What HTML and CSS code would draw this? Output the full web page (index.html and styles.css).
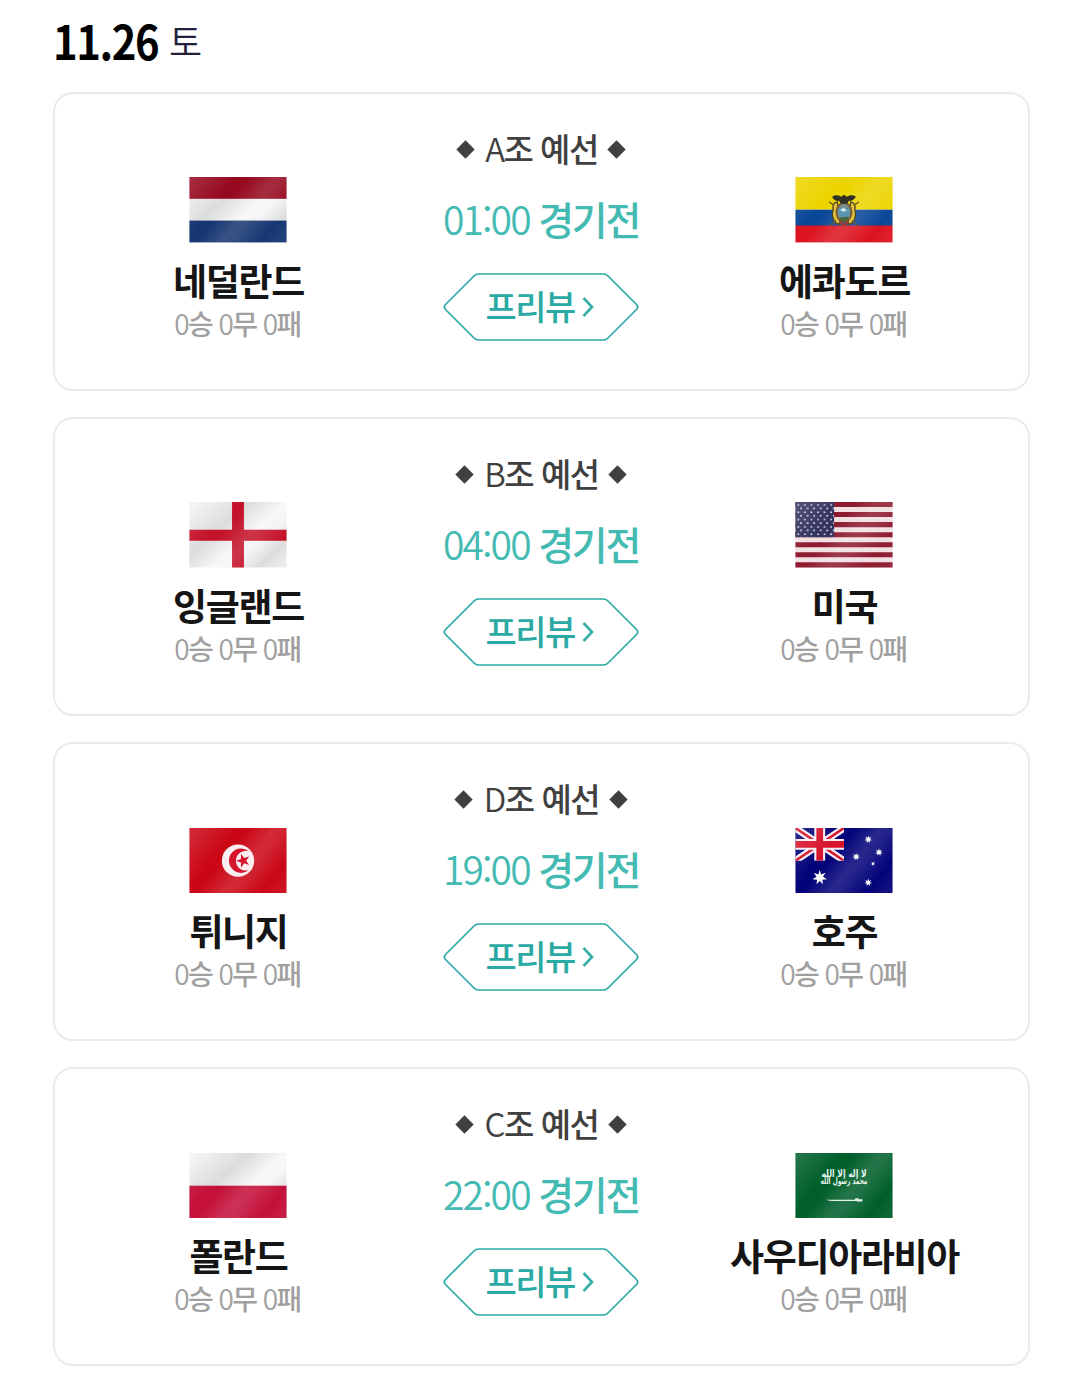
FILE: index.html
```html
<!DOCTYPE html>
<html lang="ko">
<head>
<meta charset="utf-8">
<title>11.26 경기 일정</title>
<link rel="stylesheet" href="styles.css">
</head>
<body>
<svg class="defs" width="0" height="0" aria-hidden="true">
  <defs>
    <linearGradient id="shine" gradientUnits="userSpaceOnUse" x1="8" y1="0" x2="90" y2="66">
      <stop offset="0" stop-color="#fff" stop-opacity=".13"/>
      <stop offset=".3" stop-color="#fff" stop-opacity="0"/>
      <stop offset=".38" stop-color="#fff" stop-opacity="0"/>
      <stop offset=".58" stop-color="#fff" stop-opacity=".14"/>
      <stop offset=".66" stop-color="#fff" stop-opacity=".12"/>
      <stop offset=".86" stop-color="#fff" stop-opacity="0"/>
      <stop offset="1" stop-color="#fff" stop-opacity=".05"/>
    </linearGradient>
    <linearGradient id="silver" gradientUnits="userSpaceOnUse" x1="14" y1="-6" x2="84" y2="72">
      <stop offset="0" stop-color="#f4f4f4"/>
      <stop offset=".34" stop-color="#dcdcdc"/>
      <stop offset=".58" stop-color="#f8f8f8"/>
      <stop offset=".7" stop-color="#f4f4f4"/>
      <stop offset=".86" stop-color="#dcdcdc"/>
      <stop offset="1" stop-color="#ececec"/>
    </linearGradient>
    <symbol id="preview" viewBox="0 0 196 70">
      <path d="M35.500 2H160.500Q163 2 165 4L193.500 32.500Q196 35 193.500 37.500L165 66Q163 68 160.500 68H35.500Q33 68 31 66L2.500 37.500Q0 35 2.500 32.500L31 4Q33 2 35.500 2Z" fill="#fff" stroke="#2ba9a3" stroke-width="1.700"/>
    </symbol>
    <path id="star7" d="M0-10 1.900-4 7.800-6.200 4.300-1 9.700 2.200 3.500 2.800 4.300 9 0 4.500-4.300 9-3.500 2.800-9.700 2.200-4.300-1-7.800-6.200-1.900-4Z" fill="#fff"/>
    <pattern id="stars" width="6.600" height="7.400" patternUnits="userSpaceOnUse">
      <circle cx="3" cy="2.900" r=".9" fill="#ececf8"/>
      <circle cx="5.700" cy="6.400" r=".9" fill="#ececf8"/>
    </pattern>
  </defs>
</svg>

<main class="schedule">
  <h1 class="date"><span class="date-num">11.26</span><span class="date-day">토</span></h1>

  <section class="match">
    <div class="team">
      <svg class="flag" viewBox="0 0 98 66">
        <rect width="98" height="66" fill="url(#silver)"/>
        <rect width="98" height="22" fill="#96091f"/><rect y="44" width="98" height="22" fill="#173772"/>
        <rect width="98" height="22" fill="url(#shine)"/><rect y="44" width="98" height="22" fill="url(#shine)"/>
      </svg>
      <strong class="name">네덜란드</strong>
      <p class="record"><i>0</i>승 <i>0</i>무 <i>0</i>패</p>
    </div>
    <div class="info">
      <p class="group"><b class="dia"></b><span><i>A</i>조 예선</span><b class="dia"></b></p>
      <p class="time"><i>01:00</i> 경기전</p>
      <a class="preview"><svg class="frame"><use href="#preview"/></svg><span>프리뷰</span><svg class="chev" viewBox="0 0 12 20"><path d="M1.500 1 10 10 1.500 19"/></svg></a>
    </div>
    <div class="team">
      <svg class="flag" viewBox="0 0 98 66">
        <rect width="98" height="33" fill="#ecd400"/><rect y="33" width="98" height="16.500" fill="#0a4798"/><rect y="49" width="98" height="17" fill="#dc1420"/>
        <rect width="98" height="66" fill="url(#shine)"/>
        <path d="M42 25Q37 26 38 33 36 40 40 46L45 48 44 34ZM56 25Q61 26 60 33 62 40 58 46L53 48 54 34Z" fill="#dcc040" stroke="#51441f" stroke-width="1.300"/>
        <path d="M34 25 38 28M64 25 60 28M35 49 41 44M63 49 57 44" stroke="#6a5a2a" stroke-width="1.300"/>
        <ellipse cx="49" cy="35.500" rx="7.500" ry="9.500" fill="#7b8e90" stroke="#7a5a28" stroke-width="2"/>
        <path d="M43 33Q49 29 55 33L54 40Q49 42 44 39Z" fill="#5796b5"/><path d="m45 33 4-2 3 3-4 1Z" fill="#d6e7e5"/>
        <path d="M44 41 54 40 51 45 46 44Z" fill="#47663e"/>
        <path d="M37 20Q42 17 46 20L49 18 52 20Q57 17 61 20Q58 25 54 24L52 27H46L44 24Q39 25 37 20Z" fill="#343223"/>
        <path d="M45 45 49 49 53 45" stroke="#a8362b" stroke-width="2" fill="none"/>
      </svg>
      <strong class="name">에콰도르</strong>
      <p class="record"><i>0</i>승 <i>0</i>무 <i>0</i>패</p>
    </div>
  </section>

  <section class="match">
    <div class="team">
      <svg class="flag" viewBox="0 0 98 66">
        <rect width="98" height="66" fill="url(#silver)"/>
        <path d="M43 0H55V28H98V39H55V66H43V39H0V28H43Z" fill="#c4132a"/>
        <path d="M43 0H55V28H98V39H55V66H43V39H0V28H43Z" fill="url(#shine)"/>
      </svg>
      <strong class="name">잉글랜드</strong>
      <p class="record"><i>0</i>승 <i>0</i>무 <i>0</i>패</p>
    </div>
    <div class="info">
      <p class="group"><b class="dia"></b><span><i>B</i>조 예선</span><b class="dia"></b></p>
      <p class="time"><i>04:00</i> 경기전</p>
      <a class="preview"><svg class="frame"><use href="#preview"/></svg><span>프리뷰</span><svg class="chev" viewBox="0 0 12 20"><path d="M1.500 1 10 10 1.500 19"/></svg></a>
    </div>
    <div class="team">
      <svg class="flag" viewBox="0 0 98 66">
        <rect width="98" height="66" fill="#f2e0e3"/>
        <path d="M0 2.540H98M0 12.690H98M0 22.850H98M0 33H98M0 43.150H98M0 53.310H98M0 63.460H98" stroke="#8e1b30" stroke-width="5.080"/>
        <rect width="39" height="35.500" fill="#33345f"/><rect width="39" height="35.500" fill="url(#stars)"/>
        <rect width="98" height="66" fill="url(#shine)"/>
      </svg>
      <strong class="name">미국</strong>
      <p class="record"><i>0</i>승 <i>0</i>무 <i>0</i>패</p>
    </div>
  </section>

  <section class="match low">
    <div class="team">
      <svg class="flag" viewBox="0 0 98 66">
        <rect width="98" height="66" fill="#cb0716"/>
        <rect width="98" height="66" fill="url(#shine)"/>
        <circle cx="49" cy="33" r="16.300" fill="#fbeef0"/>
        <path d="M60 23.500A12.300 12.300 0 1 0 60 42.500 10 10 0 1 1 60 23.500Z" fill="#d4152b"/>
        <path d="M47 33 52 31.300V26L55.200 30.300 60.300 28.700 57.200 33 60.300 37.300 55.200 35.700 52 40V34.700Z" fill="#d4152b"/>
      </svg>
      <strong class="name">튀니지</strong>
      <p class="record"><i>0</i>승 <i>0</i>무 <i>0</i>패</p>
    </div>
    <div class="info">
      <p class="group"><b class="dia"></b><span><i>D</i>조 예선</span><b class="dia"></b></p>
      <p class="time"><i>19:00</i> 경기전</p>
      <a class="preview"><svg class="frame"><use href="#preview"/></svg><span>프리뷰</span><svg class="chev" viewBox="0 0 12 20"><path d="M1.500 1 10 10 1.500 19"/></svg></a>
    </div>
    <div class="team">
      <svg class="flag" viewBox="0 0 98 66">
        <rect width="98" height="66" fill="#04047a"/>
        <svg width="49" height="33" viewBox="0 0 49 33">
          <path d="M0 0 49 33M49 0 0 33" stroke="#f6eef4" stroke-width="7"/>
          <path d="M0 0 49 33M49 0 0 33" stroke="#d8142c" stroke-width="2.600"/>
          <path d="M24.500 0V33M0 16.500H49" stroke="#f6eef4" stroke-width="11"/>
          <path d="M24.500 0V33M0 16.500H49" stroke="#d8142c" stroke-width="6.800"/>
        </svg>
        <use href="#star7" transform="translate(24.500 50) scale(.76)"/>
        <use href="#star7" transform="translate(73.500 11.500) scale(.4)"/>
        <use href="#star7" transform="translate(61.300 29) scale(.4)"/>
        <use href="#star7" transform="translate(84.300 24.500) scale(.4)"/>
        <use href="#star7" transform="translate(73.500 55) scale(.4)"/>
        <use href="#star7" transform="translate(78.300 36) scale(.22)"/>
        <rect width="98" height="66" fill="url(#shine)"/>
      </svg>
      <strong class="name">호주</strong>
      <p class="record"><i>0</i>승 <i>0</i>무 <i>0</i>패</p>
    </div>
  </section>

  <section class="match low">
    <div class="team">
      <svg class="flag" viewBox="0 0 98 66">
        <rect width="98" height="66" fill="url(#silver)"/>
        <rect y="33" width="98" height="33" fill="#c4103a"/><rect y="33" width="98" height="33" fill="url(#shine)"/>
      </svg>
      <strong class="name">폴란드</strong>
      <p class="record"><i>0</i>승 <i>0</i>무 <i>0</i>패</p>
    </div>
    <div class="info">
      <p class="group"><b class="dia"></b><span><i>C</i>조 예선</span><b class="dia"></b></p>
      <p class="time"><i>22:00</i> 경기전</p>
      <a class="preview"><svg class="frame"><use href="#preview"/></svg><span>프리뷰</span><svg class="chev" viewBox="0 0 12 20"><path d="M1.500 1 10 10 1.500 19"/></svg></a>
    </div>
    <div class="team">
      <svg class="flag" viewBox="0 0 98 66">
        <rect width="98" height="66" fill="#005f2b"/>
        <rect width="98" height="66" fill="url(#shine)"/>
        <text class="creed" transform="translate(49 24) scale(.64 .85)">لا إله إلا الله</text>
        <text class="creed" transform="translate(49 31.500) scale(.49 .8)">محمد رسول الله</text>
        <path d="M31 47.300H60V46H62V45.500H63.500V46.700H67.500V49H62.500L61 48.500H38Q34 48.500 31 47.300Z" fill="#e6f3ea"/>
      </svg>
      <strong class="name">사우디아라비아</strong>
      <p class="record"><i>0</i>승 <i>0</i>무 <i>0</i>패</p>
    </div>
  </section>
</main>
</body>
</html>
```
FILE: styles.css
```css
* { box-sizing: border-box; }
body {
  margin: 0;
  background: #fff;
  font-family: "Noto Sans CJK KR", sans-serif;
  color: #151515;
}
p, h1 { margin: 0; }
i { font-style: normal; }
.defs { display: block; }
.schedule {
  width: 1080px;
  padding: 0 50px 0 53px;
  display: flex;
  flex-direction: column;
  gap: 26px;
}
.date {
  height: 66px;
  padding-top: 12px;
  display: flex;
  line-height: 56px;
}
.date-num {
  width: 115px;
  font-size: 47px;
  font-weight: 700;
  letter-spacing: -1.6px;
  transform: scaleX(.89);
  transform-origin: left;
  color: #000;
}
.date-day {
  font-size: 36px;
  font-weight: 350;
  line-height: 58px;
  margin: -1px 0 0 1px;
  color: #23203d;
}
.match {
  height: 299px;
  padding: 0 31px;
  border: 2px solid #ebebeb;
  border-radius: 20px;
  display: grid;
  grid-template-columns: repeat(3, 303px);
}
.team {
  padding-top: 83.3px;
  display: flex;
  flex-direction: column;
  align-items: center;
  white-space: nowrap;
}
.low .team { padding-top: 84px; }
.flag {
  display: block;
  width: 98px;
  height: 65.4px;
}
.name {
  margin-top: 13px;
  padding-left: 2px;
  font-size: 37px;
  font-weight: 700;
  line-height: 48px;
  letter-spacing: -1.3px;
}
.record {
  font-size: 28px;
  font-weight: 500;
  line-height: 38px;
  letter-spacing: -1.6px;
  color: #a0a0a0;
}
.low .record { margin-top: -.7px; }
.record i { font-weight: 350; }
.info {
  padding-top: 35px;
  display: flex;
  flex-direction: column;
  align-items: center;
  white-space: nowrap;
}
.group {
  display: flex;
  align-items: center;
  gap: 13.5px;
  padding-left: 1px;
  font-size: 33px;
  font-weight: 500;
  line-height: 38px;
  letter-spacing: -1.5px;
  color: #404040;
}
.group i { font-weight: 350; }
.dia {
  width: 13px;
  height: 13px;
  margin-top: 3px;
  background: #404040;
  transform: rotate(45deg);
}
.dia:last-child { margin-left: -1px; }
.time {
  margin-top: 25px;
  padding-left: 1px;
  font-size: 39px;
  font-weight: 500;
  line-height: 52px;
  letter-spacing: -2.3px;
  color: #43bab2;
}
.time i {
  font-weight: 350;
  letter-spacing: -1.9px;
}
.preview {
  position: relative;
  width: 196px;
  height: 70px;
  margin-top: 28px;
  padding-left: 43px;
  display: flex;
  align-items: center;
  gap: 7px;
  font-size: 34px;
  font-weight: 500;
  letter-spacing: -1.5px;
  line-height: 64px;
  color: #2ba9a3;
}
.preview span {
  position: relative;
  margin-top: -2px;
}
.frame {
  position: absolute;
  inset: 0;
  width: 196px;
  height: 70px;
}
.chev {
  position: relative;
  width: 12px;
  height: 20px;
  fill: none;
  stroke: #37aea7;
  stroke-width: 2.6;
}
.creed {
  font-family: "DejaVu Sans", sans-serif;
  font-size: 12px;
  font-weight: 700;
  text-anchor: middle;
  fill: #e6f3ea;
}
```
